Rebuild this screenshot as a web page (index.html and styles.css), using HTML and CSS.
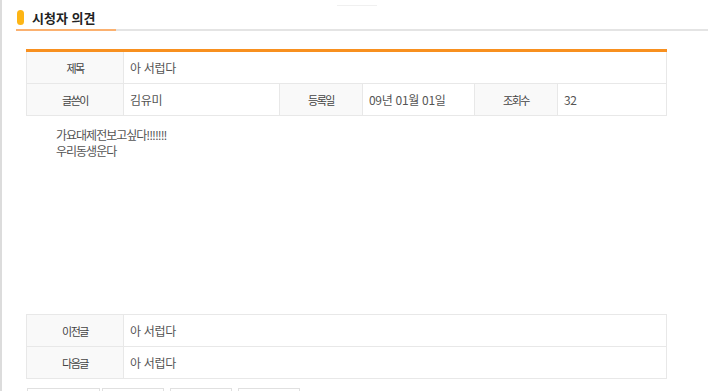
FILE: index.html
```html
<!DOCTYPE html>
<html lang="ko">
<head>
    <meta charset="UTF-8">
    <meta name="viewport" content="width=device-width, initial-scale=1.0">
    <title>시청자 의견</title>
    <link rel="stylesheet" href="styles.css">
</head>
<body>
    <div class="top-mark"></div>
    <div class="board">
        <div class="title-bar">
            <h2 class="title">시청자 의견</h2>
        </div>

        <table class="view-table">
            <colgroup>
                <col class="c-label">
                <col class="c-name">
                <col class="c-label2">
                <col class="c-date">
                <col class="c-label2">
                <col>
            </colgroup>
            <tr>
                <th>제목</th>
                <td colspan="5">아 서럽다</td>
            </tr>
            <tr>
                <th>글쓴이</th>
                <td>김유미</td>
                <th>등록일</th>
                <td>09년 01월 01일</td>
                <th>조회수</th>
                <td>32</td>
            </tr>
        </table>

        <div class="content">
            <p>가요대제전보고싶다!!!!!!!</p>
            <p>우리동생운다</p>
        </div>

        <table class="nav-table">
            <colgroup>
                <col class="c-label">
                <col>
            </colgroup>
            <tr>
                <th>이전글</th>
                <td>아 서럽다</td>
            </tr>
            <tr>
                <th>다음글</th>
                <td>아 서럽다</td>
            </tr>
        </table>

        <div class="buttons">
            <span class="btn b1"></span>
            <span class="btn b2"></span>
            <span class="btn b3"></span>
            <span class="btn b4"></span>
        </div>
    </div>
</body>
</html>
```

FILE: styles.css
```css
html, body {
    height: 100%;
}
body {
    margin: 0;
    border-left: 2px solid #dcdcdc;
    font-family: "Noto Sans CJK KR", sans-serif;
    color: #555;
    background: #fff;
    overflow: hidden;
}
.top-mark {
    width: 40px;
    height: 1px;
    margin: 5px 0 0 335px;
    background: #f0f0f0;
}
.board {
    width: 692px;
    margin-left: 14px;
}
.title-bar {
    height: 23px;
    border-bottom: 2px solid #e4e4e4;
}
.title {
    display: flex;
    align-items: center;
    gap: 8px;
    width: 100px;
    height: 23px;
    margin: 0 0 -2px;
    border-bottom: 2px solid #fbb170;
    font-size: 13px;
    font-weight: bold;
    color: #222;
    line-height: 1;
}
.title::before {
    content: "";
    width: 7px;
    height: 15px;
    margin-left: 1px;
    border-radius: 4px;
    background: #fdb515;
}
table {
    width: 641px;
    margin-left: 10px;
    border-collapse: collapse;
    table-layout: fixed;
}
.c-label {
    width: 97px;
}
.c-name {
    width: 156px;
}
.c-label2 {
    width: 83px;
}
.c-date {
    width: 112px;
}
th, td {
    height: 31px;
    padding: 0;
    border: 1px solid #e8e8e8;
    font-size: 12px;
    text-align: left;
}
th {
    background: #f9f9f9;
    font-weight: normal;
    text-align: center;
    color: #444;
    font-size: 11px;
    letter-spacing: -1.5px;
}
td {
    padding-left: 6px;
    letter-spacing: -0.3px;
    color: #555;
}
.view-table {
    margin-top: 18px;
    border-top: 3px solid #f8901f;
}
.content {
    height: 176px;
    padding: 11px 0 11px 30px;
    margin-left: 10px;
    font-size: 12px;
    line-height: 16px;
    letter-spacing: -1px;
    color: #555;
}
.content p {
    margin: 0;
}
.buttons {
    display: flex;
    margin: 9px 0 0 11px;
}
.btn {
    height: 24px;
    border: 1px solid #e0e0e0;
}
.b1 {
    width: 71px;
}
.b2 {
    width: 60px;
    margin-left: 2px;
}
.b3 {
    width: 60px;
    margin-left: 6px;
}
.b4 {
    width: 60px;
    margin-left: 6px;
}
```
